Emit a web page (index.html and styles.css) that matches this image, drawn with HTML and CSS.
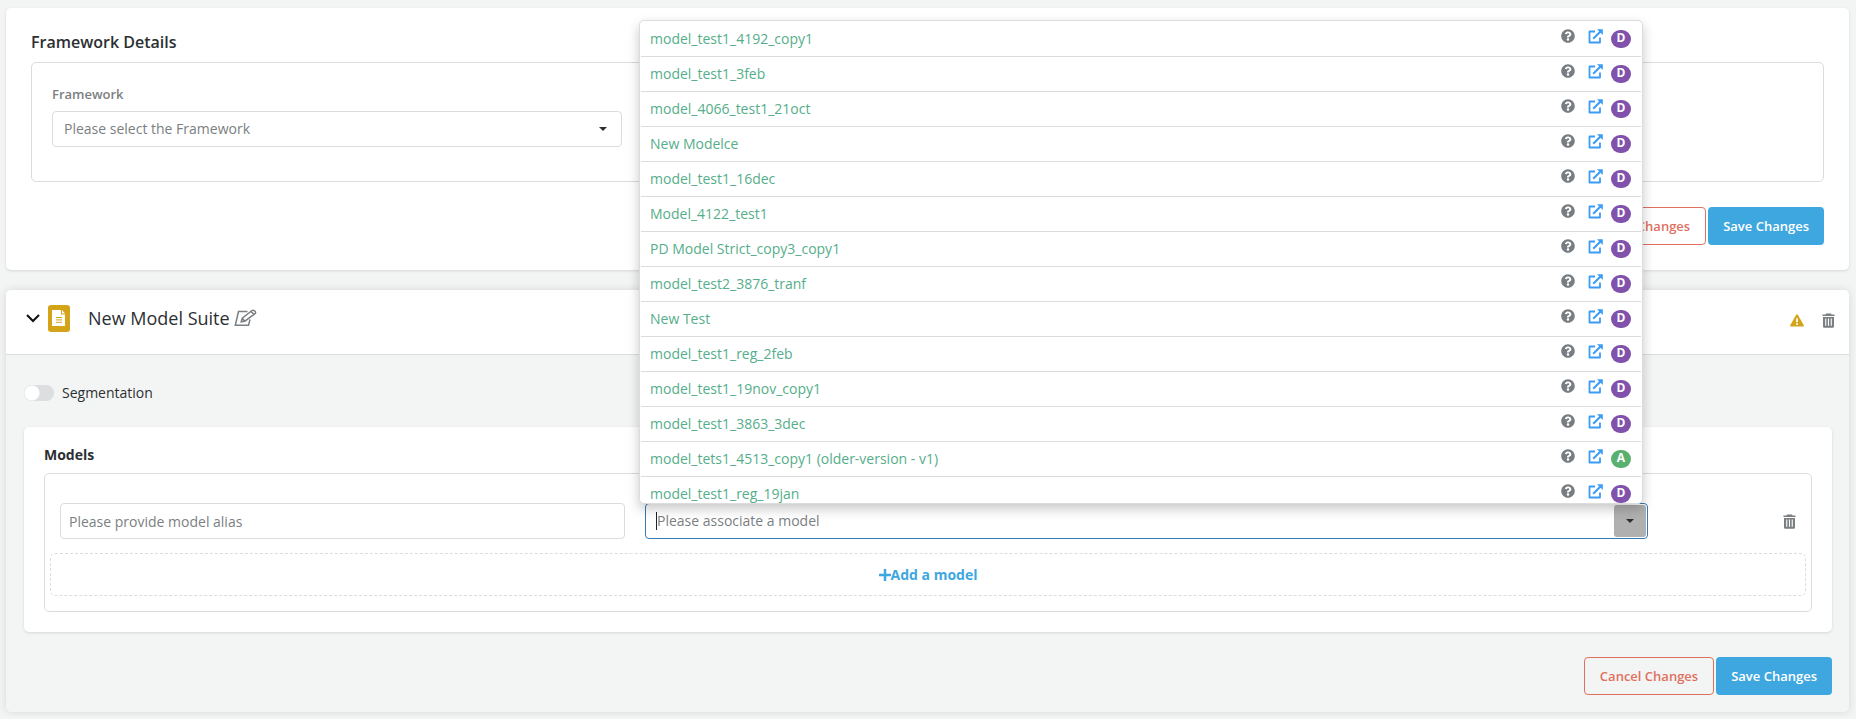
FILE: index.html
```html
<!DOCTYPE html>
<html lang="en">
<head>
<meta charset="utf-8">
<meta name="viewport" content="width=device-width, initial-scale=1">
<title>Framework Details</title>
<link rel="stylesheet" href="styles.css">
</head>
<body>
<svg class="sprite" aria-hidden="true">
  <symbol id="i-question" viewBox="0 0 512 512"><path d="M504 256c0 137-111 248-248 248S8 393 8 256 119 8 256 8s248 111 248 248zM262.700 90c-54.500 0-89.300 23-116.500 63.800-3.500 5.300-2.400 12.400 2.700 16.300l34.700 26.300c5.200 3.900 12.600 3 16.700-2.100 17.900-22.700 30.100-35.800 57.300-35.800 20.400 0 45.700 13.100 45.700 33 0 15-12.400 22.700-32.500 34C247.100 238.500 216 254.900 216 296v4c0 6.600 5.400 12 12 12h56c6.600 0 12-5.400 12-12v-1.300c0-28.500 83.200-29.600 83.200-106.700 0-58-60.200-102-116.500-102zM256 338c-25.400 0-46 20.600-46 46s20.600 46 46 46 46-20.600 46-46-20.600-46-46-46z"/></symbol>
  <symbol id="i-external" viewBox="0 0 15 15"><path d="M7 2.500H1.500V13.500H12V8.500" fill="none" stroke="currentColor" stroke-width="1.800" stroke-linejoin="round"/><path d="M5.200 9.800L12.500 2.500" fill="none" stroke="currentColor" stroke-width="2"/><path d="M9 0.300H14.800V6.100Z"/></symbol>
  <symbol id="i-trash" viewBox="0 0 13 15"><path d="M4 0.500H9L9.500 1.500H12.500V3H0.500V1.500H3.500Z"/><path fill-rule="evenodd" d="M1 4H12V13.500Q12 14.700 10.800 14.700H2.200Q1 14.700 1 13.500ZM3.200 5.500V12.800H4.300V5.500ZM5.950 5.500V12.800H7.050V5.500ZM8.700 5.500V12.800H9.800V5.500Z"/></symbol>
  <symbol id="i-caret" viewBox="0 0 8 4"><path d="M0 0H8L4 4Z"/></symbol>
</svg>

<main class="page">
  <section class="card framework">
    <h2 class="card-title">Framework Details</h2>
    <div class="panel framework-panel">
      <div class="field">
        <label class="label" for="framework">Framework</label>
        <div class="select-box">
          <select class="control" id="framework"><option>Please select the Framework</option></select>
          <svg class="caret"><use href="#i-caret"/></svg>
        </div>
      </div>
    </div>
    <div class="actions">
      <button class="btn btn-cancel" type="button">Cancel Changes</button>
      <button class="btn btn-save" type="button">Save Changes</button>
    </div>
  </section>

  <section class="card suite">
    <header class="suite-head">
      <button class="icon-btn" type="button" aria-label="Collapse"><svg class="chevron" viewBox="0 0 14 9"><path d="M1 1L7 7L13 1"/></svg></button>
      <svg class="doc" viewBox="0 0 22 27"><rect width="22" height="27" rx="3" fill="#d4a418"/><path d="M4 5H13V9.500H17V21H4Z" fill="#fff"/><path d="M14 5L17 8.500H14Z" fill="#fff"/><path d="M8 12.500H14M8 14.900H14M8 17.300H14" stroke="#d4a418"/></svg>
      <h2 class="suite-title">New Model Suite</h2>
      <button class="icon-btn" type="button" aria-label="Edit name"><svg class="edit" viewBox="0 0 23 18"><path d="M13.500 2.500H4.500L1.300 16.300H14.500L16 10.500"/><path d="M7.200 12.800L8.300 9.200L18 1.500Q19.200 0.600 20.800 2Q22.300 3.500 21 4.700L10.800 12.200ZM17 2.500L19.800 5.300M8.300 9.200L10.800 12.200"/></svg></button>
      <div class="suite-tools">
        <svg class="warn" viewBox="0 0 14 13" role="img" aria-label="Warning"><path d="M6.200 0.700Q7 -0.400 7.800 0.700L13.800 11.300Q14 12.500 13 12.500H1Q0 12.500 0.200 11.300Z" fill="#d4a418"/><path d="M7 4.200V8.200M7 9.300V11" stroke="#fff" stroke-width="1.700"/></svg>
        <button class="icon-btn" type="button" aria-label="Delete suite"><svg class="trash"><use href="#i-trash"/></svg></button>
      </div>
    </header>

    <div class="suite-body">
      <label class="switch"><input type="checkbox">Segmentation</label>
      <div class="card models">
        <h3 class="models-title">Models</h3>
        <div class="panel models-panel">
          <div class="model-row">
            <input class="control" type="text" placeholder="Please provide model alias" aria-label="Model alias">
            <div class="combo">
              <span class="text-cursor"></span>
              <input class="combo-input" type="text" placeholder="Please associate a model" aria-label="Associated model">
              <button class="combo-toggle" type="button" aria-label="Toggle models"><svg class="caret-icon"><use href="#i-caret"/></svg></button>
              <ul class="menu">
                <li class="item"><span class="name">model_test1_4192_copy1</span><svg class="question"><use href="#i-question"/></svg><a class="external" href="#" aria-label="Open"><svg><use href="#i-external"/></svg></a><span class="badge">D</span></li>
                <li class="item"><span class="name">model_test1_3feb</span><svg class="question"><use href="#i-question"/></svg><a class="external" href="#" aria-label="Open"><svg><use href="#i-external"/></svg></a><span class="badge">D</span></li>
                <li class="item"><span class="name">model_4066_test1_21oct</span><svg class="question"><use href="#i-question"/></svg><a class="external" href="#" aria-label="Open"><svg><use href="#i-external"/></svg></a><span class="badge">D</span></li>
                <li class="item"><span class="name">New Modelce</span><svg class="question"><use href="#i-question"/></svg><a class="external" href="#" aria-label="Open"><svg><use href="#i-external"/></svg></a><span class="badge">D</span></li>
                <li class="item"><span class="name">model_test1_16dec</span><svg class="question"><use href="#i-question"/></svg><a class="external" href="#" aria-label="Open"><svg><use href="#i-external"/></svg></a><span class="badge">D</span></li>
                <li class="item"><span class="name">Model_4122_test1</span><svg class="question"><use href="#i-question"/></svg><a class="external" href="#" aria-label="Open"><svg><use href="#i-external"/></svg></a><span class="badge">D</span></li>
                <li class="item"><span class="name">PD Model Strict_copy3_copy1</span><svg class="question"><use href="#i-question"/></svg><a class="external" href="#" aria-label="Open"><svg><use href="#i-external"/></svg></a><span class="badge">D</span></li>
                <li class="item"><span class="name">model_test2_3876_tranf</span><svg class="question"><use href="#i-question"/></svg><a class="external" href="#" aria-label="Open"><svg><use href="#i-external"/></svg></a><span class="badge">D</span></li>
                <li class="item"><span class="name">New Test</span><svg class="question"><use href="#i-question"/></svg><a class="external" href="#" aria-label="Open"><svg><use href="#i-external"/></svg></a><span class="badge">D</span></li>
                <li class="item"><span class="name">model_test1_reg_2feb</span><svg class="question"><use href="#i-question"/></svg><a class="external" href="#" aria-label="Open"><svg><use href="#i-external"/></svg></a><span class="badge">D</span></li>
                <li class="item"><span class="name">model_test1_19nov_copy1</span><svg class="question"><use href="#i-question"/></svg><a class="external" href="#" aria-label="Open"><svg><use href="#i-external"/></svg></a><span class="badge">D</span></li>
                <li class="item"><span class="name">model_test1_3863_3dec</span><svg class="question"><use href="#i-question"/></svg><a class="external" href="#" aria-label="Open"><svg><use href="#i-external"/></svg></a><span class="badge">D</span></li>
                <li class="item"><span class="name">model_tets1_4513_copy1 (older-version - v1)</span><svg class="question"><use href="#i-question"/></svg><a class="external" href="#" aria-label="Open"><svg><use href="#i-external"/></svg></a><span class="badge badge-a">A</span></li>
                <li class="item"><span class="name">model_test1_reg_19jan</span><svg class="question"><use href="#i-question"/></svg><a class="external" href="#" aria-label="Open"><svg><use href="#i-external"/></svg></a><span class="badge">D</span></li>
              </ul>
            </div>
            <button class="icon-btn row-delete" type="button" aria-label="Delete model"><svg class="trash"><use href="#i-trash"/></svg></button>
          </div>
          <button class="add" type="button"><svg class="plus" viewBox="0 0 12 12"><path d="M6 0V12M0 6H12"/></svg>Add a model</button>
        </div>
      </div>
      <div class="actions suite-actions">
        <button class="btn btn-cancel" type="button">Cancel Changes</button>
        <button class="btn btn-save" type="button">Save Changes</button>
      </div>
    </div>
  </section>
</main>
</body>
</html>
```
FILE: styles.css
```css
* { box-sizing: border-box; }
body {
  margin: 0;
  background: #f3f5f4;
  color: #2b2f33;
  font: 14px/20px "Open Sans", "Noto Sans", sans-serif;
}
button, input, select { font: inherit; color: inherit; }
button { cursor: pointer; }
svg { display: block; fill: currentColor; }
h2, h3, ul { margin: 0; padding: 0; }
.sprite { position: absolute; width: 0; height: 0; }

.page { display: flex; flex-direction: column; gap: 20px; padding: 8px 7px 5px 6px; }
.card { background: #fff; border-radius: 5px; box-shadow: 0 1px 3px rgba(0, 0, 0, 0.12); }
.panel { border: 1px solid #dcdcdc; border-radius: 5px; }

.framework { padding: 22px 25px 25px; }
.card-title { font-size: 16px; line-height: 24px; font-weight: 600; }
.framework-panel {
  display: grid;
  grid-template-columns: repeat(3, minmax(0, 1fr));
  gap: 21px;
  margin-top: 8px;
  padding: 21px 20px 34px;
}
.label { display: block; margin-bottom: 7px; color: #7b7f82; font-size: 13px; font-weight: 600; }
.control {
  display: block;
  width: 100%;
  height: 36px;
  padding: 0 8px;
  border: 1px solid #dcdcdc;
  border-radius: 4px;
  background: #fff;
  color: #7b7f82;
  appearance: none;
  outline: 0;
}
::placeholder { color: #7b7f82; opacity: 1; }
.select-box { display: grid; align-items: center; }
.select-box .control { grid-area: 1 / 1; padding: 0 11px; }
.caret { grid-area: 1 / 1; justify-self: end; width: 8px; height: 4px; margin-right: 15px; pointer-events: none; }

.actions { display: flex; justify-content: flex-end; gap: 2px; margin-top: 25px; }
.btn { height: 38px; padding: 0 15px; border: 0; border-radius: 4px; font-size: 13px; font-weight: 600; }
.btn-save { background: #3fa7df; color: #fff; }
.btn-cancel { border: 1px solid #e0705f; background: transparent; color: #e0705f; }

.suite { background: #f3f5f4; box-shadow: 0 0 8px rgba(0, 0, 0, 0.12); }
.suite-head {
  display: flex;
  align-items: center;
  height: 65px;
  padding: 0 14px 8px 20px;
  border-bottom: 1px solid #dcdcdc;
  border-radius: 5px 5px 0 0;
  background: #fff;
}
.icon-btn { padding: 0; border: 0; background: none; color: #7b7f82; }
.chevron { width: 14px; height: 9px; fill: none; stroke: #111; stroke-width: 2; }
.doc { width: 22px; height: 27px; margin-left: 8px; }
.suite-title { margin: 0 4px 0 18px; font-size: 18px; line-height: 24px; font-weight: 400; }
.edit { width: 23px; height: 18px; fill: none; stroke: #7b7f82; stroke-width: 1.5; }
.suite-tools { display: flex; align-items: center; gap: 18px; margin-left: auto; padding-top: 5px; }
.warn { width: 14px; height: 13px; }
.trash { width: 13px; height: 15px; }

.suite-body { padding: 28px 17px 17px 18px; }
.switch { display: flex; align-items: center; gap: 8px; }
.switch input {
  width: 30px;
  height: 16px;
  margin: 0;
  border-radius: 8px;
  appearance: none;
  background: radial-gradient(circle at 8px 8px, #fff 7px, #dcdee0 8px);
}
.models { margin-top: 24px; padding: 18px 20px 20px; }
.models-title { font-size: 14px; line-height: 20px; font-weight: 700; }
.models-panel { margin-top: 8px; padding: 29px 5px 15px; }
.model-row {
  display: grid;
  grid-template-columns: minmax(0, 565fr) minmax(0, 1003fr) 128px;
  align-items: center;
  gap: 20px;
  padding: 0 10px;
}
.combo {
  position: relative;
  display: flex;
  align-items: center;
  height: 36px;
  padding: 0 1px 0 10px;
  border: 1px solid #337ab7;
  border-radius: 4px;
}
.text-cursor { width: 1px; height: 18px; background: #222; }
.combo-input { flex: 1; min-width: 0; padding: 0; border: 0; outline: 0; background: none; }
.combo-toggle {
  display: grid;
  place-items: center;
  width: 32px;
  height: 32px;
  padding: 0;
  border: 0;
  border-radius: 3px;
  background: #b0b0b0;
}
.caret-icon { width: 8px; height: 4px; }
.row-delete { justify-self: end; }
.menu {
  position: absolute;
  right: 4px;
  bottom: 34px;
  left: -7px;
  max-height: 484px;
  padding: 1px 1px 0;
  overflow: hidden;
  border: 1px solid #dcdcdc;
  border-radius: 5px;
  background: #fff;
  box-shadow: 0 5px 12px rgba(0, 0, 0, 0.22);
  list-style: none;
}
.item {
  display: flex;
  align-items: center;
  height: 35px;
  padding: 0 10px 0 9px;
  border-bottom: 1px solid #dcdcdc;
}
.name { flex: 1; color: #55ae8a; }
.question { width: 14px; height: 14px; margin-bottom: 6px; color: #777d82; }
.external { margin: 0 8px 6px 13px; color: #3b9cf5; }
.external svg { width: 15px; height: 15px; }
.badge {
  width: 20px;
  height: 18px;
  border-radius: 9px;
  background: #8152ab;
  color: #fff;
  font-size: 12px;
  line-height: 16px;
  font-weight: 700;
  text-align: center;
}
.badge-a { background: #5ab06e; }
.add {
  display: flex;
  align-items: center;
  justify-content: center;
  width: 100%;
  height: 43px;
  margin-top: 14px;
  border: 1px dashed #dcdcdc;
  border-radius: 5px;
  background: none;
  color: #3fa7df;
  font-weight: 700;
}
.plus { width: 12px; height: 12px; stroke: currentColor; stroke-width: 2.500; }
```
